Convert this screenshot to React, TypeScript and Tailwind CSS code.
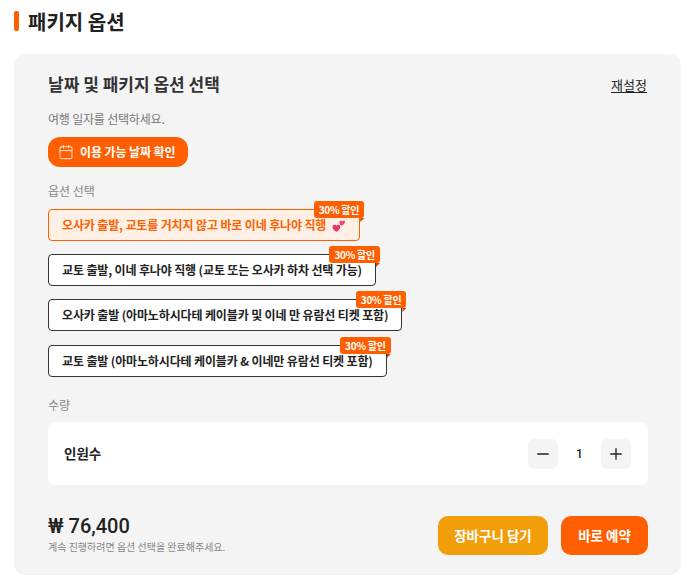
import { Calendar, Minus, Plus } from 'lucide-react';

const options = [
  { label: '오사카 출발, 교토를 거치지 않고 바로 이네 후나야 직행', active: true },
  { label: '교토 출발, 이네 후나야 직행 (교토 또는 오사카 하차 선택 가능)', active: false },
  { label: '오사카 출발 (아마노하시다테 케이블카 및 이네 만 유람선 티켓 포함)', active: false },
  { label: '교토 출발 (아마노하시다테 케이블카 & 이네만 유람선 티켓 포함)', active: false },
];

const OptionButton = ({ label, active }: { label: string; active: boolean }) => (
  <div className="relative w-fit last:mt-px">
    <button
      className={
        active
          ? 'flex h-8 items-center gap-[6px] rounded-[4px] border border-[#ff5f00] bg-[#fff0e6] px-[13px] text-xs font-bold tracking-[-0.14px] text-[#ff5f00]'
          : 'flex h-8 items-center rounded-[4px] border border-[#333333] bg-white px-[13px] text-xs font-bold tracking-[-0.14px] text-[#222222]'
      }
    >
      {label}
      {active && (
        <svg className="mr-px" width="13" height="13" viewBox="0 0 13 13">
          <path d="M4.5 12.8 C2 11.5 .3 9.8 .5 7.6 C.7 5.4 3.4 5 4.6 6.8 C5.8 5 8.6 5.6 8.3 7.9 C8.1 9.8 6.2 11.6 4.5 12.8Z" fill="#e8336d" />
          <path d="M9.6 6.8 C8.4 5.8 7.3 4.6 7.5 3 C7.7 1.2 9.6 1 10.3 2.4 C11.1 .8 13.1 1.4 13 3 C12.9 4.6 11.2 5.9 9.6 6.8Z" fill="#f0437e" />
        </svg>
      )}
    </button>
    <span className="absolute -top-2 -right-1 flex h-[17px] items-center rounded-[3px] bg-[#ff5f00] px-[5px] text-[10px] font-bold tracking-[-0.25px] text-white">
      30% 할인
    </span>
    <span className="absolute top-[9px] -right-1 h-1 w-1 bg-[#c9480a] [clip-path:polygon(0_0,100%_0,0_100%)]" />
  </div>
);

export default function App() {
  return (
    <div className="min-h-[588px] bg-white px-3.5 pt-[11px] font-['Noto_Sans_CJK_KR',sans-serif] text-[#222222]">
      <h2 className="flex h-5 items-center gap-[9px] text-xl leading-5 font-bold">
        <span className="h-5 w-[5px] rounded-[2px] bg-[#ff5f00]" />
        <span className="pt-0.5">패키지 옵션</span>
      </h2>

      <section className="mt-[23px] h-[521px] w-[667px] rounded-xl bg-[#f4f4f4] pt-[21px] pr-[33px] pl-[34px]">
        <div className="flex h-5 items-center justify-between">
          <h3 className="self-start text-[17px] leading-[18px] font-bold text-[#333333]">날짜 및 패키지 옵션 선택</h3>
          <button className="mr-px text-[13px] leading-5 text-[#222222] underline underline-offset-2">재설정</button>
        </div>

        <p className="mt-4 text-xs leading-4 tracking-[-0.2px] text-[#777777]">여행 일자를 선택하세요.</p>
        <button className="mt-[10px] flex h-[30px] items-center gap-[6px] rounded-xl bg-[#ff5f00] pr-[13px] pl-[10px] text-xs leading-4 font-bold tracking-[-0.1px] text-white">
          <Calendar size={16} strokeWidth={1.25} />
          이용 가능 날짜 확인
        </button>

        <p className="mt-4 text-xs leading-4 text-[#888888]">옵션 선택</p>
        <div className="mt-[10px] flex flex-col gap-[13px]">
          {options.map((o) => (
            <OptionButton key={o.label} label={o.label} active={o.active} />
          ))}
        </div>

        <p className="mt-5 text-xs leading-4 text-[#888888]">수량</p>
        <div className="mt-[9px] flex h-[63px] items-center justify-between rounded-lg bg-white px-4">
          <span className="mb-0.5 text-[13.5px] leading-5 font-bold">인원수</span>
          <div className="mr-px flex items-center">
            <button className="flex h-[30px] w-[30px] items-center justify-center rounded-md bg-[#f4f4f4] text-[#222222]">
              <Minus size={18} strokeWidth={1.75} />
            </button>
            <span className="w-[43px] text-center font-['Roboto',sans-serif] text-xs leading-4 font-medium">1</span>
            <button className="flex h-[30px] w-[30px] items-center justify-center rounded-md bg-[#f4f4f4] text-[#222222]">
              <Plus size={18} strokeWidth={1.75} />
            </button>
          </div>
        </div>

        <div className="mt-[29px] flex items-center justify-between">
          <div className="mb-[2px]">
            <p className="font-['Roboto',sans-serif] text-[20px] leading-6 font-medium">₩ 76,400</p>
            <p className="mt-[2px] text-[10px] leading-[14px] text-[#888888]">계속 진행하려면 옵션 선택을 완료해주세요.</p>
          </div>
          <div className="flex gap-[13px]">
            <button className="h-[39px] w-[110px] rounded-[10px] bg-[#f29d0a] text-[13.5px] font-bold text-white">장바구니 담기</button>
            <button className="h-[39px] w-[87px] rounded-[10px] bg-[#ff5f00] text-[13.5px] font-bold text-white">바로 예약</button>
          </div>
        </div>
      </section>
    </div>
  );
}
